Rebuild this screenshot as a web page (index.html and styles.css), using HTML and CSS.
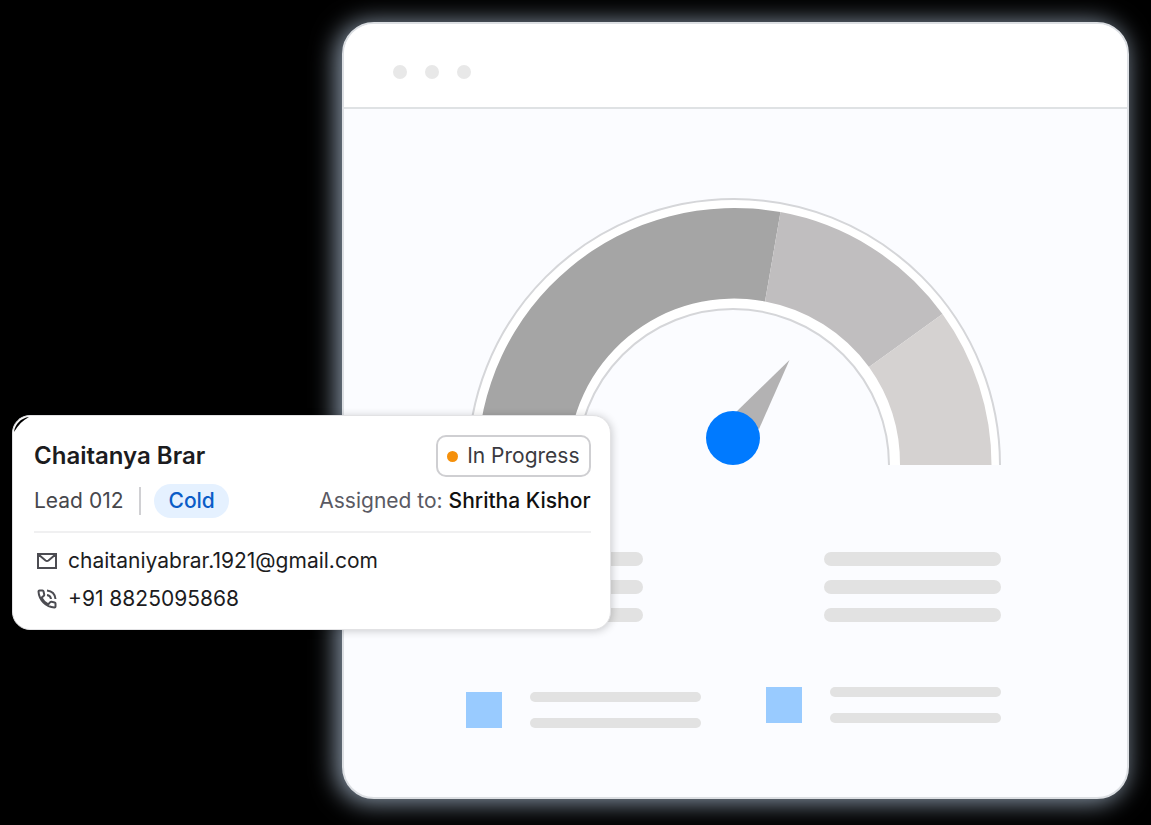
FILE: index.html
```html
<!DOCTYPE html>
<html lang="en">
<head>
  <meta charset="UTF-8">
  <meta name="viewport" content="width=device-width, initial-scale=1.0">
  <title>Lead overview</title>
  <link rel="stylesheet" href="styles.css">
</head>
<body>
  <main class="stage">
    <section class="window">
      <header class="window-bar">
        <span class="window-dot"></span>
        <span class="window-dot"></span>
        <span class="window-dot"></span>
      </header>

      <div class="window-body">
        <svg class="gauge" viewBox="0 0 535 269" aria-hidden="true">
          <!-- white band with thin outlines -->
          <path fill="#fff" d="M2 268A266 266 0 0 1 534 268H423A156 156 0 0 0 111 268Z"/>
          <path class="gauge-line" d="M2 268A266 266 0 0 1 534 268"/>
          <path class="gauge-line" d="M111 268A156 156 0 0 1 423 268"/>
          <!-- segments -->
          <path fill="#a5a5a5" d="M11.500 268A257 257 0 0 1 314.500 15.100L299 104.500A166 166 0 0 0 102 268Z"/>
          <path fill="#c0bebf" d="M314.500 15.100A257 257 0 0 1 476.500 117L403 170A166 166 0 0 0 299 104.500Z"/>
          <path fill="#d5d2d1" d="M476.500 117A257 257 0 0 1 525.500 268H434A166 166 0 0 0 403 170Z"/>
          <!-- needle -->
          <path fill="#b3b2b3" d="M323.500 163L267 218L293 232Z"/>
          <circle cx="267" cy="241" r="27" fill="#007aff"/>
        </svg>

        <div class="columns">
          <div class="bars">
            <span class="bar"></span>
            <span class="bar"></span>
            <span class="bar"></span>
          </div>
          <div class="bars">
            <span class="bar"></span>
            <span class="bar"></span>
            <span class="bar"></span>
          </div>
        </div>

        <div class="legends">
          <div class="legend legend-low">
            <span class="swatch"></span>
            <div class="legend-bars">
              <span class="thin-bar"></span>
              <span class="thin-bar"></span>
            </div>
          </div>
          <div class="legend">
            <span class="swatch"></span>
            <div class="legend-bars">
              <span class="thin-bar"></span>
              <span class="thin-bar"></span>
            </div>
          </div>
        </div>
      </div>
    </section>

    <article class="card">
      <svg class="card-corner" viewBox="0 0 18 18" aria-hidden="true">
        <path d="M1 16C2 8 8 2 16 1C10 4 5 9 1 16Z"/>
      </svg>
      <div class="row">
        <h1 class="name">Chaitanya Brar</h1>
        <span class="status"><span class="status-dot"></span>In Progress</span>
      </div>
      <div class="row row-lead">
        <div class="lead">
          <span class="lead-id">Lead 012</span>
          <span class="tag">Cold</span>
        </div>
        <p class="assigned">Assigned to: <span class="assignee">Shritha Kishor</span></p>
      </div>
      <ul class="contacts">
        <li class="contact">
          <svg class="icon" viewBox="0 0 22 22" aria-hidden="true">
            <path d="M2 4H20V18H2ZM2.500 4.500L9.500 10.500Q11 11.500 12.500 10.500L19.500 4.500"/>
          </svg>
          chaitaniyabrar.1921@gmail.com
        </li>
        <li class="contact">
          <svg class="icon" viewBox="0 0 22 22" aria-hidden="true">
            <path d="M3.500 2.500H6.500Q7.300 2.500 7.500 3.300L8.200 6.500Q8.300 7.300 7.800 7.800L5.500 9.800C7 12.700 9.300 15 12.200 16.500L14.200 14.200Q14.700 13.700 15.500 13.800L18.700 14.500Q19.500 14.700 19.500 15.500V18.500Q19.500 19.500 18.500 19.500C10 19 3 12 2.500 3.500Q2.500 2.500 3.500 2.500ZM11 7C13.500 7.300 14.700 8.500 15 11M11 2.500C16 3 19 6 19.500 11"/>
          </svg>
          +91 8825095868
        </li>
      </ul>
    </article>
  </main>
</body>
</html>
```
FILE: styles.css
```css
* {
  box-sizing: border-box;
}
body {
  margin: 0;
  background-color: #000;
  font-family: Inter, "Liberation Sans", sans-serif;
  font-size: 21px;
  line-height: 28px;
  color: #1c1c1e;
}
.stage {
  position: relative;
  padding: 22px 22px 26px 342px;
}

/* browser window */
.window {
  border: 2px solid #dcdfe3;
  border-radius: 32px;
  background-color: #fbfcff;
  overflow: hidden;
  box-shadow: -4px 2px 24px 2px rgba(170, 187, 208, 0.8);
}
.window-bar {
  display: flex;
  align-items: center;
  gap: 18px;
  padding: 41px 49px 28px;
  background-color: #fff;
  border-bottom: 2px solid #dfe2e4;
}
.window-dot {
  width: 14px;
  height: 14px;
  border-radius: 50%;
  background-color: #e8e8e8;
}
.window-body {
  padding: 88px 126px 69px 122px;
}
.gauge {
  display: block;
  width: 100%;
  overflow: visible;
}
.gauge-line {
  fill: none;
  stroke: #d5d6d9;
  stroke-width: 2;
}
.columns {
  display: flex;
  justify-content: space-between;
  margin-top: 86px;
}
.bars {
  display: grid;
  gap: 14px;
  width: 33%;
}
.bar {
  height: 14px;
  border-radius: 7px;
  background-color: #e2e2e2;
}
.legends {
  display: flex;
  justify-content: space-between;
  min-height: 41px;
  margin-top: 65px;
}
.legend {
  display: flex;
  align-self: flex-start;
  gap: 28px;
  width: 44%;
}
.legend-low {
  align-self: flex-end;
}
.swatch {
  width: 36px;
  height: 36px;
  background-color: #99cbff;
}
.legend-bars {
  display: flex;
  flex: 1;
  flex-direction: column;
  justify-content: space-between;
}
.thin-bar {
  height: 10px;
  border-radius: 5px;
  background-color: #e2e2e2;
}

/* lead card, lies over the window */
.card {
  position: absolute;
  top: 415px;
  left: 12px;
  width: 52%;
  padding: 19px 19px 16px 21px;
  border: 1px solid #e2e2e4;
  border-radius: 18px;
  background-color: #fff;
  box-shadow: 1px 1px 8px rgba(0, 0, 0, 0.2);
}
.card-corner {
  position: absolute;
  top: 0;
  left: 0;
  width: 18px;
  height: 18px;
}
.row {
  display: flex;
  align-items: center;
  justify-content: space-between;
}
.row-lead {
  padding: 7px 0 13px;
  border-bottom: 2px solid #f0f0f1;
}
.name {
  margin: 0;
  font-size: 24px;
  font-weight: 600;
}
.status {
  display: flex;
  align-items: center;
  gap: 9px;
  padding: 5px 9px;
  border: 2px solid #cfcfd2;
  border-radius: 10px;
  color: #3a3a3f;
}
.status-dot {
  width: 11px;
  height: 11px;
  border-radius: 50%;
  background-color: #f5900b;
}
.lead {
  display: flex;
  align-items: center;
  gap: 13px;
}
.lead-id {
  padding-right: 16px;
  border-right: 2px solid #d0d0d3;
  color: #47474c;
}
.tag {
  padding: 3px 14px;
  border-radius: 17px;
  background-color: #e5f1ff;
  color: #0a5cc7;
  font-weight: 450;
}
.assigned {
  margin: 0;
  color: #5a5a63;
}
.assignee {
  color: #111;
  font-weight: 450;
}
.contacts {
  display: grid;
  gap: 10px;
  margin: 0;
  padding: 14px 0 0 2px;
  list-style: none;
}
.contact {
  display: flex;
  align-items: center;
  gap: 10px;
}
.icon {
  width: 22px;
  height: 22px;
  fill: none;
  stroke: #4c4c52;
  stroke-width: 2;
}
```
